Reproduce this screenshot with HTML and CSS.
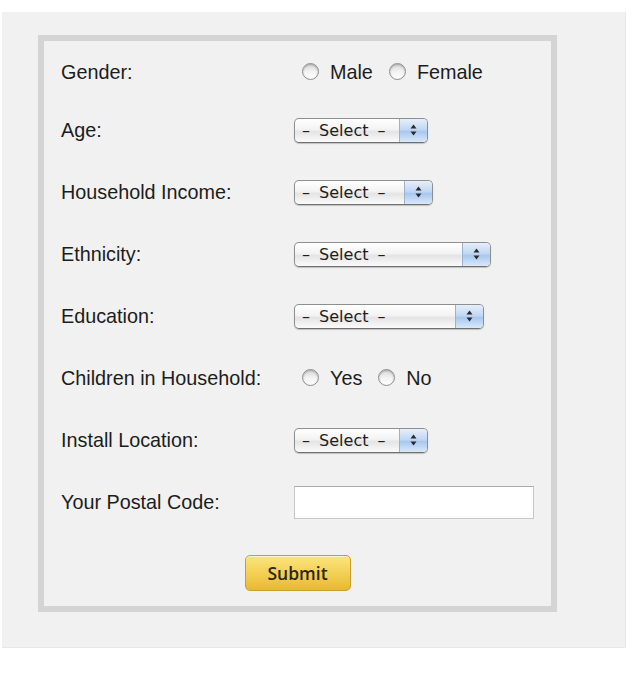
FILE: index.html
```html
<!DOCTYPE html>
<html lang="en">
<head>
<meta charset="utf-8">
<title>Survey</title>
<link rel="stylesheet" href="styles.css">
</head>
<body>
<div class="panel">
  <form class="box">
    <div class="row first">
      <span class="label">Gender:</span>
      <div class="ctrl">
        <span class="radio"></span><span class="opt">Male</span>
        <span class="radio"></span><span class="opt">Female</span>
      </div>
    </div>
    <div class="row">
      <span class="label">Age:</span>
      <div class="ctrl">
        <div class="sel w-age"><span class="sel-text">–&nbsp;Select&nbsp;–</span><span class="sel-arrow"><svg width="7" height="12" viewBox="0 0 7 12"><path d="M3.5 0.5 L6.5 4.5 L0.5 4.5 Z M3.5 11.5 L6.5 7.5 L0.5 7.5 Z" fill="#2a2a2a"/></svg></span></div>
      </div>
    </div>
    <div class="row">
      <span class="label">Household Income:</span>
      <div class="ctrl">
        <div class="sel w-income"><span class="sel-text">–&nbsp;Select&nbsp;–</span><span class="sel-arrow"><svg width="7" height="12" viewBox="0 0 7 12"><path d="M3.5 0.5 L6.5 4.5 L0.5 4.5 Z M3.5 11.5 L6.5 7.5 L0.5 7.5 Z" fill="#2a2a2a"/></svg></span></div>
      </div>
    </div>
    <div class="row">
      <span class="label">Ethnicity:</span>
      <div class="ctrl">
        <div class="sel w-eth"><span class="sel-text">–&nbsp;Select&nbsp;–</span><span class="sel-arrow"><svg width="7" height="12" viewBox="0 0 7 12"><path d="M3.5 0.5 L6.5 4.5 L0.5 4.5 Z M3.5 11.5 L6.5 7.5 L0.5 7.5 Z" fill="#2a2a2a"/></svg></span></div>
      </div>
    </div>
    <div class="row">
      <span class="label">Education:</span>
      <div class="ctrl">
        <div class="sel w-edu"><span class="sel-text">–&nbsp;Select&nbsp;–</span><span class="sel-arrow"><svg width="7" height="12" viewBox="0 0 7 12"><path d="M3.5 0.5 L6.5 4.5 L0.5 4.5 Z M3.5 11.5 L6.5 7.5 L0.5 7.5 Z" fill="#2a2a2a"/></svg></span></div>
      </div>
    </div>
    <div class="row">
      <span class="label">Children in Household:</span>
      <div class="ctrl">
        <span class="radio"></span><span class="opt">Yes</span>
        <span class="radio"></span><span class="opt">No</span>
      </div>
    </div>
    <div class="row">
      <span class="label">Install Location:</span>
      <div class="ctrl">
        <div class="sel w-age"><span class="sel-text">–&nbsp;Select&nbsp;–</span><span class="sel-arrow"><svg width="7" height="12" viewBox="0 0 7 12"><path d="M3.5 0.5 L6.5 4.5 L0.5 4.5 Z M3.5 11.5 L6.5 7.5 L0.5 7.5 Z" fill="#2a2a2a"/></svg></span></div>
      </div>
    </div>
    <div class="row">
      <span class="label">Your Postal Code:</span>
      <div class="ctrl">
        <input class="postal" type="text" aria-label="Your Postal Code">
      </div>
    </div>
    <div class="actions">
      <button class="submit" type="button">Submit</button>
    </div>
  </form>
</div>
</body>
</html>
```
FILE: styles.css
```css
html, body {
  margin: 0;
  padding: 0;
  background: #ffffff;
}

body {
  font-family: "Liberation Sans", Arial, Helvetica, sans-serif;
  color: #1c1c1c;
}

.panel {
  box-sizing: border-box;
  width: 624px;
  margin: 12px 0 0 2px;
  padding: 23px 0 35px 36px;
  background: #f1f1f1;
  border: 1px solid #e7e7e7;
  border-top: none;
  border-left: none;
}

.box {
  box-sizing: border-box;
  width: 519px;
  margin: 0;
  padding: 16px 0 15px 17px;
  border: 6px solid #d4d4d4;
  background: #f1f1f1;
  display: flex;
  flex-direction: column;
  gap: 32px;
}

.row {
  display: flex;
  align-items: center;
  height: 30px;
}

.row.first {
  margin-bottom: -4px;
}

.label {
  width: 233px;
  flex: none;
  font-size: 19.8px;
  line-height: 1;
  padding-top: 2px;
}

.ctrl {
  display: flex;
  align-items: center;
}

.radio {
  box-sizing: border-box;
  width: 17px;
  height: 17px;
  border-radius: 50%;
  border: 1px solid #8e8e8e;
  background: linear-gradient(#d9d9d9, #f4f4f4 55%, #ffffff);
  box-shadow: inset 0 1px 2px rgba(0, 0, 0, 0.25);
  margin-left: 8px;
  margin-right: 11px;
}

.opt + .radio {
  margin-left: 16px;
}

.opt {
  font-size: 19.8px;
  line-height: 1;
  padding-top: 2px;
}

.sel {
  box-sizing: border-box;
  display: flex;
  height: 25px;
  border: 1px solid #8f8f8f;
  border-bottom-color: #6f6f6f;
  border-radius: 5px;
  background: linear-gradient(#ffffff, #f3f3f3 45%, #e4e4e4 55%, #fbfbfb);
  box-shadow: 0 1px 1px rgba(0, 0, 0, 0.2);
  overflow: hidden;
}

.w-age { width: 134px; }
.w-income { width: 139px; }
.w-eth { width: 197px; }
.w-edu { width: 190px; }

.sel-text {
  flex: 1;
  padding-left: 7px;
  font-family: "DejaVu Sans", Verdana, sans-serif;
  font-size: 16px;
  line-height: 23px;
  color: #1e1e1e;
  word-spacing: 4px;
}

.sel-arrow {
  width: 27px;
  flex: none;
  display: flex;
  align-items: center;
  justify-content: center;
  border-left: 1px solid #9db0cc;
  background: linear-gradient(#e6eefa, #c2d8f3 45%, #a8c8ef 55%, #d9e8fa);
}

.postal {
  box-sizing: border-box;
  width: 240px;
  height: 33px;
  margin: 0;
  border: 1px solid #c8c8c8;
  border-top-color: #a9a9a9;
  background: #ffffff;
  font-size: 16px;
  padding: 0 4px;
  outline: none;
}

.actions {
  display: flex;
  justify-content: center;
  margin-top: 6px;
  padding-right: 17px;
}

.submit {
  box-sizing: border-box;
  width: 106px;
  height: 36px;
  margin: 0;
  border: 1px solid #c89f2f;
  border-radius: 5px;
  background: linear-gradient(#fbe57f, #f3d055 50%, #e8b931);
  box-shadow: inset 0 1px 0 rgba(255, 255, 255, 0.6);
  font-family: "Open Sans", sans-serif;
  font-weight: 600;
  font-size: 17.5px;
  color: #2b2616;
  padding: 0;
  cursor: pointer;
}
```
